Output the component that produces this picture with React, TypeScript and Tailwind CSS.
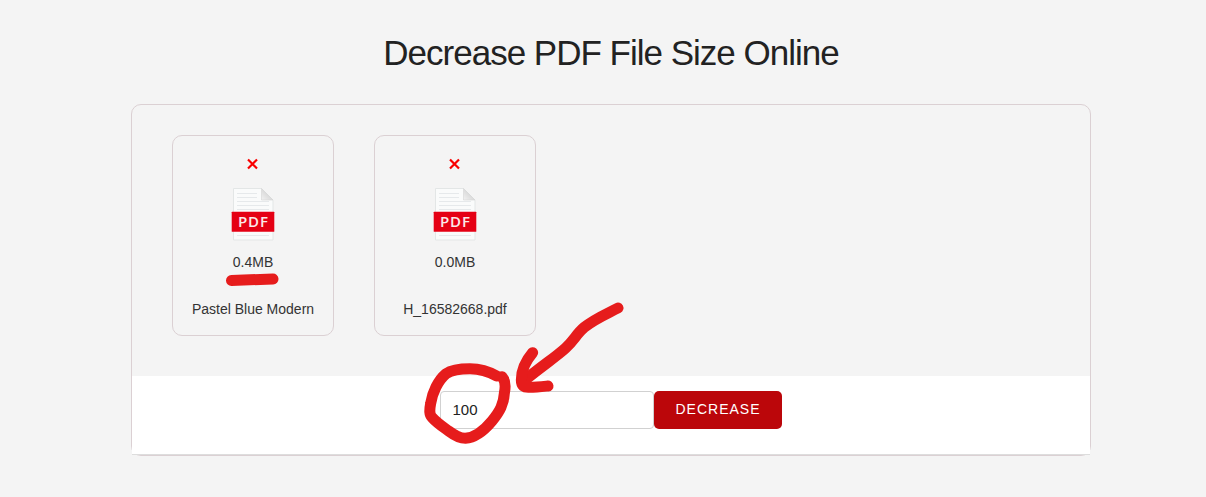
import React, { useState } from 'react';

const PdfIcon: React.FC = () => (
  <svg viewBox="0 0 44 54" className="w-11 h-[54px]" aria-hidden="true">
    <defs>
      <linearGradient id="fold" x1="0" y1="1" x2="1" y2="0">
        <stop offset="0" stopColor="#f2f2f2" />
        <stop offset="1" stopColor="#c4c4c4" />
      </linearGradient>
    </defs>
    <path d="M2.5 1.5H30.5L42 13V53H2.5Z" fill="#fafbfb" stroke="#e3e6e6" />
    <path d="M6 6.5H26M6 10.5H26M6 14.5H38M6 18.5H38M6 22.5H38M6 48.5H38" stroke="#e6e9eb" fill="none" />
    <path d="M30.5 1.5V13H42Z" fill="url(#fold)" stroke="#d5d5d5" strokeWidth="0.6" />
    <rect x="0.7" y="24.7" width="42.6" height="20" rx="0.5" fill="#e50014" />
    <text x="22.5" y="39.5" textAnchor="middle" fontSize="15" fontWeight="600" fill="#fbe9ea" letterSpacing="1" className="font-['Open_Sans',sans-serif]">
      PDF
    </text>
  </svg>
);

const App: React.FC = () => {
  const [targetSize, setTargetSize] = useState('100');
  const [files, setFiles] = useState([
    { id: 1, name: 'Pastel Blue Modern', size: '0.4MB', marked: true },
    { id: 2, name: 'H_16582668.pdf', size: '0.0MB', marked: false },
  ]);

  const removeFile = (id: number) => setFiles(files.filter((file) => file.id !== id));

  return (
    <div className="min-h-screen bg-[#f4f4f4] pl-4 font-['Liberation_Sans',Arial,sans-serif] text-[#222]">
      <main className="mx-auto max-w-[960px] pt-8 pb-10">
        <h1 className="text-center text-[35px] leading-[42px] tracking-[-1px]">Decrease PDF File Size Online</h1>

        <section className="mt-[30px] rounded-[10px] border border-[#dbd0d3]">
          <ul className="flex flex-wrap gap-10 px-10 pt-[30px] pb-10">
            {files.map((file) => (
              <li key={file.id} className="flex w-[162px] flex-col items-center rounded-[10px] border border-[#dbd0d3] pt-5 pb-4 text-sm text-[#333]">
                <button type="button" aria-label={`Remove ${file.name}`} onClick={() => removeFile(file.id)} className="cursor-pointer">
                  <svg viewBox="0 0 16 16" className="size-4">
                    <path d="M3 3.5L12 12.5M12 3.5L3 12.5" stroke="#f90000" strokeWidth="2.2" />
                  </svg>
                </button>
                <div className="mt-[15px]">
                  <PdfIcon />
                </div>
                <p className="relative mt-[11px] leading-5">
                  {file.size}
                  {file.marked && (
                    <svg viewBox="0 0 54 14" className="absolute top-5 -left-2 h-3.5 w-[54px]" aria-hidden="true">
                      <path d="M6.5 8.5L48 7" stroke="#e61c1c" strokeWidth="11" strokeLinecap="round" />
                    </svg>
                  )}
                </p>
                <p className="mt-[27px] leading-5">{file.name}</p>
              </li>
            ))}
          </ul>

          <div className="border-b border-[#ddd] bg-white pt-[15px] pb-[25px]">
            <form className="relative mx-auto flex w-fit" onSubmit={(e) => e.preventDefault()}>
              <input
                type="text"
                aria-label="Target size"
                value={targetSize}
                onChange={(e) => setTargetSize(e.target.value)}
                className="h-[38px] w-[214px] rounded border border-[#d1d1d1] bg-white px-[11px] pb-0.5 text-[15px] outline-none"
              />
              <button type="submit" className="h-[38px] cursor-pointer rounded-[5px] bg-[#bb060a] px-[21px] pb-0.5 text-sm tracking-[1px] text-white uppercase">
                Decrease
              </button>
              <svg viewBox="0 0 690 510" className="pointer-events-none absolute -top-[101px] -left-[30px] h-[170px] w-[230px]" aria-hidden="true">
                <g fill="none" stroke="#e61c1c" strokeWidth="33" strokeLinecap="round" strokeLinejoin="round">
                  <path d="M260 258C236 244 208 236 180 236C150 236 124 240 108 251C84 271 67 308 62 340C58 362 58 374 66 382C80 398 98 410 116 423C136 438 150 445 166 445C192 443 222 422 246 393C270 364 281 342 283 310C287 290 287 272 276 260" />
                  <path d="M624 54C590 72 555 86 523 112C500 131 492 151 467 174C440 199 400 225 345 270" />
                  <path d="M368 188C345 215 334 243 334 270C334 288 342 293 358 292C380 292 396 290 414 288" />
                </g>
              </svg>
            </form>
          </div>
        </section>
      </main>
    </div>
  );
};

export default App;
